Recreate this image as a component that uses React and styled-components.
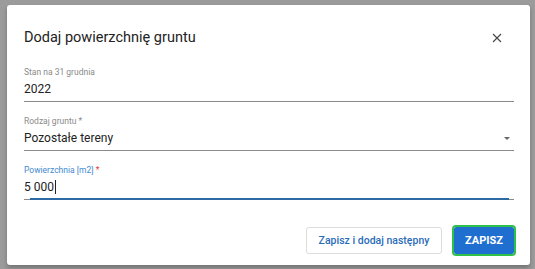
import React from "react";
import styled, { createGlobalStyle } from "styled-components";

const GlobalStyle = createGlobalStyle`
  html, body {
    margin: 0;
    padding: 0;
    background: #9b9b9b;
    font-family: Roboto, "Liberation Sans", Arial, sans-serif;
  }
`;

export default function App() {
  return (
    <>
      <GlobalStyle />
      <Backdrop>
        <Dialog>
          <Header>
            <Title>Dodaj powierzchnię gruntu</Title>
            <CloseButton aria-label="Zamknij">
              <svg width="10" height="10" viewBox="0 0 10 10">
                <path d="M1 1 L9 9 M9 1 L1 9" stroke="#444" strokeWidth="1.1" fill="none" />
              </svg>
            </CloseButton>
          </Header>
          <Body>
            <Field>
              <Label>Stan na 31 grudnia</Label>
              <Value>2022</Value>
            </Field>
            <Field>
              <Label>Rodzaj gruntu *</Label>
              <Value>
                Pozostałe tereny
                <Arrow />
              </Value>
            </Field>
            <Field>
              <Label $focused>
                Powierzchnia [m2] <Required>*</Required>
              </Label>
              <Value $focused>
                5 000
                <Caret />
              </Value>
            </Field>
          </Body>
          <Actions>
            <SecondaryButton>Zapisz i dodaj następny</SecondaryButton>
            <PrimaryButton>ZAPISZ</PrimaryButton>
          </Actions>
        </Dialog>
      </Backdrop>
    </>
  );
}

const Backdrop = styled.div`
  width: 535px;
  height: 269px;
  padding: 5px 5px 4px 7px;
  box-sizing: border-box;
`;

const Dialog = styled.div`
  width: 523px;
  height: 260px;
  background: #fff;
  border-radius: 3px;
  box-shadow: 0 3px 4px rgba(0, 0, 0, 0.25);
  display: flex;
  flex-direction: column;
  box-sizing: border-box;
`;

const Header = styled.div`
  display: flex;
  align-items: center;
  justify-content: space-between;
  padding: 21px 26px 0 17px;
  height: 45px;
  box-sizing: border-box;
`;

const Title = styled.h2`
  margin: 0;
  font-size: 14.5px;
  line-height: 24px;
  font-weight: 400;
  color: #222;
`;

const CloseButton = styled.button`
  width: 14px;
  height: 14px;
  padding: 0;
  border: none;
  background: none;
  display: flex;
  align-items: center;
  justify-content: center;
  cursor: pointer;
`;

const Body = styled.div`
  display: flex;
  flex-direction: column;
  gap: 14px;
  padding: 17px 16px 0 17px;
`;

const Field = styled.div`
  display: flex;
  flex-direction: column;
`;

const Label = styled.label`
  font-size: 8.5px;
  line-height: 11px;
  color: ${(p) => (p.$focused ? "#3f8ad2" : "#8a8a8a")};
  margin-bottom: 3px;
`;

const Required = styled.span`
  color: #e53935;
`;

const Value = styled.div`
  position: relative;
  font-size: 12px;
  line-height: 16px;
  color: #222;
  padding-bottom: 4px;
  border-bottom: 1px solid #8a8a8a;
  display: flex;
  align-items: center;

  ${(p) =>
    p.$focused &&
    `
    &::after {
      content: "";
      position: absolute;
      left: 6px;
      right: 5px;
      bottom: -1px;
      height: 2px;
      background: #2d6aa3;
    }
  `}
`;

const Arrow = styled.span`
  position: absolute;
  right: 4px;
  top: 7px;
  width: 0;
  height: 0;
  border-left: 3px solid transparent;
  border-right: 3px solid transparent;
  border-top: 3px solid #666;
`;

const Caret = styled.span`
  display: inline-block;
  width: 1px;
  height: 14px;
  background: #222;
  margin-left: 1px;
`;

const Actions = styled.div`
  margin-top: auto;
  display: flex;
  justify-content: flex-end;
  gap: 12px;
  padding: 0 16px 11px 0;
`;

const SecondaryButton = styled.button`
  height: 27px;
  width: 136px;
  padding: 0;
  background: #fff;
  border: 1px solid #dcdcdc;
  border-radius: 3px;
  color: #2b6cb8;
  font-family: inherit;
  font-size: 10.5px;
  font-weight: 500;
  cursor: pointer;
`;

const PrimaryButton = styled.button`
  height: 27px;
  width: 60px;
  background: #1f6fd1;
  border: none;
  border-radius: 2px;
  outline: 2px solid #2fc04a;
  color: #fff;
  font-family: inherit;
  font-size: 11px;
  font-weight: 700;
  cursor: pointer;
`;
